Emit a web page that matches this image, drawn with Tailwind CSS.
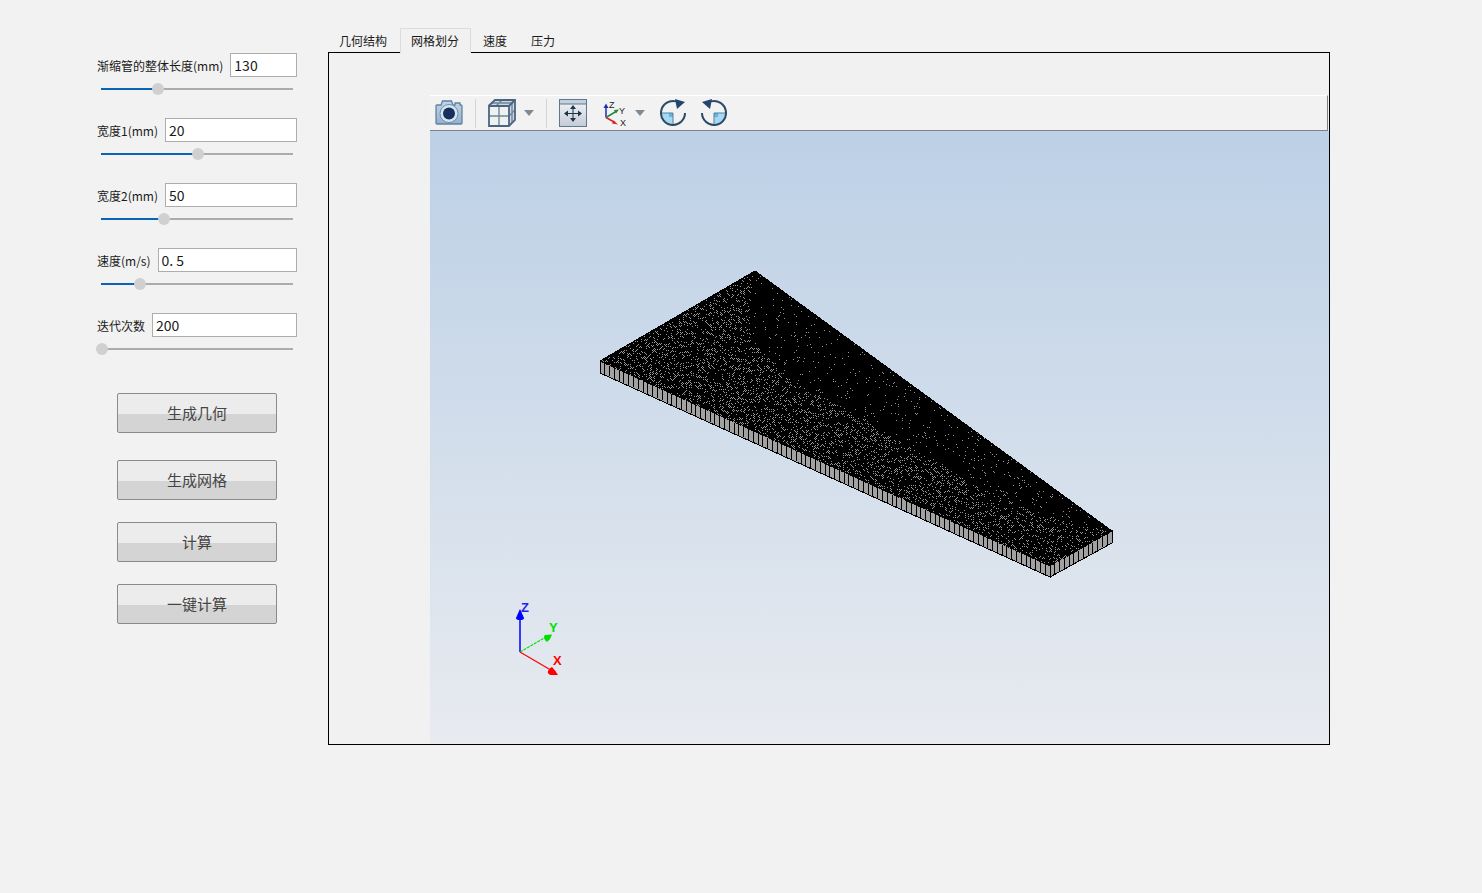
<!DOCTYPE html>
<html lang="en">
<head>
  <meta charset="UTF-8" />
  <title>渐缩管</title>
  <script src="https://cdn.jsdelivr.net/npm/@tailwindcss/browser@4"></script>
</head>
<body class="bg-[#f2f2f2] text-[#1a1a1a] text-[12px] font-['Noto_Sans_CJK_SC','Liberation_Sans',sans-serif]">
<div class="w-[1482px] h-[893px] overflow-hidden flex">

  <!-- Left form -->
  <div class="w-[328px] pl-[97px] pt-[53px] shrink-0">
    <div class="w-[200px] h-[65px]">
      <div class="flex items-center h-[24px] gap-[7px]">
        <span class="whitespace-nowrap pt-[1px]">渐缩管的整体长度(mm)</span>
        <input value="130" class="min-w-0 flex-1 h-[24px] bg-white border border-[#adadad] px-[3px] text-[14px] outline-none" />
      </div>
      <div class="relative mt-[11px] ml-[4px] w-[192px] h-[2px] bg-[#acacac]">
        <div class="h-[2px] w-[57px] bg-[#0a64b4]"></div>
        <div class="absolute left-[51px] top-[-5px] w-[12px] h-[12px] rounded-full bg-[#d0d0d0]"></div>
      </div>
    </div>
    <div class="w-[200px] h-[65px]">
      <div class="flex items-center h-[24px] gap-[7px]">
        <span class="whitespace-nowrap pt-[1px]">宽度1(mm)</span>
        <input value="20" class="min-w-0 flex-1 h-[24px] bg-white border border-[#adadad] px-[3px] text-[14px] outline-none" />
      </div>
      <div class="relative mt-[11px] ml-[4px] w-[192px] h-[2px] bg-[#acacac]">
        <div class="h-[2px] w-[97px] bg-[#0a64b4]"></div>
        <div class="absolute left-[91px] top-[-5px] w-[12px] h-[12px] rounded-full bg-[#d0d0d0]"></div>
      </div>
    </div>
    <div class="w-[200px] h-[65px]">
      <div class="flex items-center h-[24px] gap-[7px]">
        <span class="whitespace-nowrap pt-[1px]">宽度2(mm)</span>
        <input value="50" class="min-w-0 flex-1 h-[24px] bg-white border border-[#adadad] px-[3px] text-[14px] outline-none" />
      </div>
      <div class="relative mt-[11px] ml-[4px] w-[192px] h-[2px] bg-[#acacac]">
        <div class="h-[2px] w-[63px] bg-[#0a64b4]"></div>
        <div class="absolute left-[57px] top-[-5px] w-[12px] h-[12px] rounded-full bg-[#d0d0d0]"></div>
      </div>
    </div>
    <div class="w-[200px] h-[65px]">
      <div class="flex items-center h-[24px] gap-[7px]">
        <span class="whitespace-nowrap pt-[1px]">速度(m/s)</span>
        <input value="0. 5" class="min-w-0 flex-1 h-[24px] bg-white border border-[#adadad] px-[3px] text-[14px] outline-none" />
      </div>
      <div class="relative mt-[11px] ml-[4px] w-[192px] h-[2px] bg-[#acacac]">
        <div class="h-[2px] w-[39px] bg-[#0a64b4]"></div>
        <div class="absolute left-[33px] top-[-5px] w-[12px] h-[12px] rounded-full bg-[#d0d0d0]"></div>
      </div>
    </div>
    <div class="w-[200px] h-[80px]">
      <div class="flex items-center h-[24px] gap-[7px]">
        <span class="whitespace-nowrap pt-[1px]">迭代次数</span>
        <input value="200" class="min-w-0 flex-1 h-[24px] bg-white border border-[#adadad] px-[3px] text-[14px] outline-none" />
      </div>
      <div class="relative mt-[11px] ml-[4px] w-[192px] h-[2px] bg-[#acacac]">
        <div class="absolute left-[-5px] top-[-5px] w-[12px] h-[12px] rounded-full bg-[#d0d0d0]"></div>
      </div>
    </div>

    <div class="ml-[20px] w-[160px] text-[15px] text-[#444]">
      <button class="block w-full h-[40px] border border-[#8a8a8a] rounded-[2px] bg-[linear-gradient(#ececec_20px,#d4d4d4_20px)]">生成几何</button>
      <button class="block w-full h-[40px] mt-[27px] border border-[#8a8a8a] rounded-[2px] bg-[linear-gradient(#ececec_20px,#d4d4d4_20px)]">生成网格</button>
      <button class="block w-full h-[40px] mt-[22px] border border-[#8a8a8a] rounded-[2px] bg-[linear-gradient(#ececec_20px,#d4d4d4_20px)]">计算</button>
      <button class="block w-full h-[40px] mt-[22px] border border-[#8a8a8a] rounded-[2px] bg-[linear-gradient(#ececec_20px,#d4d4d4_20px)]">一键计算</button>
    </div>
  </div>

  <!-- Tabs and viewer -->
  <div class="w-[1002px] pt-[28px] shrink-0">
    <div class="flex h-[25px] items-end relative z-10">
      <div class="pl-[11px] pr-[12px] h-[24px] leading-[24px]">几何结构</div>
      <div class="px-[10px] h-[25px] leading-[24px] border border-b-0 border-[#dcdcdc] bg-[#f1f1f1] w-[71px] ml-[1px]">网格划分</div>
      <div class="px-[12px] h-[24px] leading-[24px]">速度</div>
      <div class="px-[12px] h-[24px] leading-[24px]">压力</div>
    </div>
    <div class="h-[693px] -mt-[1px] border border-black bg-[#f1f1f1] pl-[101px] pt-[42px]">
      <!-- Toolbar -->
      <div class="h-[36px] w-[898px] bg-[#f2f2f2] border-t border-white border-b border-b-[#808080] border-r border-r-[#808080] flex items-center">
        <!-- camera -->
        <svg class="ml-[5px]" width="28" height="28" viewBox="0 0 28 28">
          <defs><linearGradient id="cam" x1="0" y1="0" x2="0" y2="1"><stop offset="0" stop-color="#c5d6e6"/><stop offset="1" stop-color="#93b0cc"/></linearGradient></defs>
          <path d="M1.500 6H6L7.500 2h9L18 6h2V4h5v2h1a1 1 0 0 1 1 1v17a1 1 0 0 1-1 1H2a1 1 0 0 1-1-1V7a1 1 0 0 1 .5-1z" fill="url(#cam)" stroke="#5f82a4" stroke-width="1.300"/>
          <circle cx="14" cy="14.500" r="9" fill="#d8e5f0" stroke="#6f90b0"/>
          <circle cx="14" cy="14.500" r="6" fill="#17315e"/>
        </svg>
        <div class="ml-[12px] w-[1px] h-[29px] bg-[#d4d4d4]"></div>
        <!-- cube -->
        <svg class="ml-[12px]" width="28" height="28" viewBox="0 0 28 28">
          <path d="M1 6.500 7 1h20v20l-6 6H1z" fill="#cfd6dd"/>
          <path d="M1 7h20v20H1z" fill="#eef0f2"/>
          <path d="M11 7v20M1 17h20M8 7l6-6M21 17l6-6M4 4h20M24 4v20" fill="none" stroke="#6f879c" stroke-width="1.400"/>
          <path d="M1 6.500 7 1h20v20l-6 6H1zM1 7h20v20M21 7l6-6" fill="none" stroke="#4a6580" stroke-width="1.800"/>
        </svg>
        <svg class="ml-[8px]" width="10" height="6" viewBox="0 0 10 6"><path d="M0 0h10L5 6z" fill="#808a94"/></svg>
        <div class="ml-[12px] w-[1px] h-[29px] bg-[#d4d4d4]"></div>
        <!-- fit -->
        <svg class="ml-[12px]" width="28" height="28" viewBox="0 0 28 28">
          <defs><linearGradient id="fit" x1="0" y1="0" x2="0" y2="1"><stop offset="0" stop-color="#f5f6f8"/><stop offset="1" stop-color="#c3cbd6"/></linearGradient></defs>
          <rect x=".5" y=".5" width="27" height="27" fill="url(#fit)" stroke="#5f7890"/>
          <rect x="1" y="1" width="26" height="4" fill="#c4d0dc"/>
          <path d="M1 5h26" stroke="#5f7890"/>
          <path d="M14 8v12M7 14.500h14" stroke="#1f3347" stroke-width="1"/>
          <path d="M14 6l-3 4h6zM14 23l-3-4h6zM5 14.500l4-3v6zM23 14.500l-4-3v6z" fill="#1f3347"/>
        </svg>
        <!-- axes -->
        <svg class="ml-[15px]" width="27" height="28" viewBox="0 0 27 28">
          <path d="M4 18.500V8" stroke="#1b2fb5" stroke-width="1.500"/><path d="M4 4.500 1.500 9h5z" fill="#1b2fb5"/>
          <path d="M4 18.500l10-6" stroke="#1f8a3d" stroke-width="1.500"/><path d="M17 10.500l-5 .5 2 3.500z" fill="#1f8a3d"/>
          <path d="M4 18.500l9 5" stroke="#d8232a" stroke-width="1.500"/><path d="M16 25.500l-4.500-4-1.500 3z" fill="#d8232a"/>
          <text x="7" y="9" font-family="Liberation Sans" font-size="9" fill="#222">Z</text>
          <text x="17" y="15" font-family="Liberation Sans" font-size="9" fill="#222">Y</text>
          <text x="18" y="27" font-family="Liberation Sans" font-size="9" fill="#222">X</text>
        </svg>
        <svg class="ml-[6px]" width="10" height="6" viewBox="0 0 10 6"><path d="M0 0h10L5 6z" fill="#808a94"/></svg>
        <!-- rotate -->
        <svg class="ml-[15px]" width="26" height="28" viewBox="0 0 26 28">
          <path d="M13 14V26A12 12 0 0 1 1.500 14z" fill="#a5d9f2"/>
          <rect x="9" y="14" width="4" height="4" fill="#5db7e3"/>
          <path d="M1.500 14H13v12" fill="none" stroke="#5a7c9a"/>
          <path d="M16 2.400A12 12 0 1 0 25 14" fill="none" stroke="#2b4a68" stroke-width="2"/>
          <path d="M15 0 25 3l-8 7z" fill="#23456b"/>
        </svg>
        <svg class="ml-[15px]" width="26" height="28" viewBox="0 0 26 28">
          <path d="M13 14V26A12 12 0 0 0 24.500 14z" fill="#a5d9f2"/>
          <rect x="13" y="14" width="4" height="4" fill="#5db7e3"/>
          <path d="M24.500 14H13v12" fill="none" stroke="#5a7c9a"/>
          <path d="M10 2.400A12 12 0 1 1 1 14" fill="none" stroke="#2b4a68" stroke-width="2"/>
          <path d="M11 0 1 3l8 7z" fill="#23456b"/>
        </svg>
      </div>
      <!-- 3D view -->
      <svg id="view" class="block" width="899" height="613" viewBox="430 131 899 613">
        <defs>
          <linearGradient id="bg" x1="0" y1="0" x2="0" y2="1">
            <stop offset="0" stop-color="#bcd0e6"/>
            <stop offset="1" stop-color="#e8ebf0"/>
          </linearGradient>
        </defs>
        <rect x="430" y="131" width="899" height="613" fill="url(#bg)"/>
        <polygon points="600,361 600,373 1050,577 1050,566" fill="#a2a2a2" stroke="#000" shape-rendering="crispEdges"/>
        <polygon points="1050,566 1050,577 1112,543 1112,531" fill="#a2a2a2" stroke="#000" shape-rendering="crispEdges"/>
        <path id="side" fill="none" stroke="#000" shape-rendering="crispEdges"/>
        <polygon points="600,361 755,271 1112,531 1050,566" fill="#000" stroke="#000" shape-rendering="crispEdges"/>
        <path id="mesh" fill="none" stroke="#969696" shape-rendering="crispEdges"/>

        <!-- triad -->
        <path d="M520 652V618" stroke="#0000ff" stroke-width="1.500"/>
        <path d="M520 609q1 2 4 9q0 2-4 2t-4-2q3-7 4-9z" fill="#0000ff"/>
        <path d="M520 652l26-15" stroke="#00e000" stroke-width="1.200" stroke-dasharray="3 1"/>
        <path d="M552 634.500l-7 .5q-2 2 0 5t3 1q2-1 4-6.500z" fill="#00e000"/>
        <path d="M520 652l29 17" stroke="#ff0000" stroke-width="1.200"/>
        <path d="M558 675h-7q-4-1-3-4t4-4q3 3 6 8z" fill="#ff0000"/>
        <text x="521" y="612" font-family="Liberation Sans" font-size="13" font-weight="700" fill="#2222ee">Z</text>
        <text x="549" y="632" font-family="Liberation Sans" font-size="13" font-weight="700" fill="#00e000">Y</text>
        <text x="553" y="665" font-family="Liberation Sans" font-size="13" font-weight="700" fill="#ff0000">X</text>
      </svg>
    </div>
  </div>
</div>

<script>
  // top face dots
  const quad = [[600, 361], [755, 271], [1112, 531], [1050, 566]];
  const edge = [[750, 340], [787, 377], [853, 413], [920, 453], [985, 490], [1047, 517], [1112, 531]];

  function inside(x, y) {
    for (let i = 0; i < 4; i++) {
      const a = quad[i], b = quad[(i + 1) % 4];
      if ((b[0] - a[0]) * (y - a[1]) - (b[1] - a[1]) * (x - a[0]) < 1) return false;
    }
    return true;
  }

  function edgeY(x) {
    for (let i = 0; i < edge.length - 1; i++) {
      const a = edge[i], b = edge[i + 1];
      if (x <= b[0]) return a[1] + (b[1] - a[1]) * (x - a[0]) / (b[0] - a[0]);
    }
    return 531;
  }

  let seed = 12345;
  function rnd() {
    seed = (Math.imul(seed, 1664525) + 1013904223) >>> 0;
    return (seed >>> 8) / 16777216;
  }

  let dots = '';
  for (let y = 271; y < 567; y++) {
    for (let x = 600; x < 1113; x++) {
      const r = rnd();
      if ((x + y) % 2 || !inside(x, y)) continue;
      let p;
      if (x > 750 && y < edgeY(x)) {
        p = 0.045;
      } else {
        // scalloped bands running along the long edge
        const w = Math.sin((y - 0.46 * x + 8 * Math.sin(x / 12)) / 1.6);
        p = (0.42 - (x - 600) * 0.0002) * (0.65 + 0.35 * w);
      }
      if (r < p) dots += `M${x} ${y}.5h1`;
    }
  }
  document.getElementById('mesh').setAttribute('d', dots);

  // side faces
  let e = '';
  for (let i = 0; i <= 94; i++) {
    const x = 600 + 450 * i / 94, y = 361 + 205 * i / 94;
    e += `M${x.toFixed(1)} ${y.toFixed(1)}v11`;
  }
  for (let i = 0; i <= 13; i++) {
    const x = 1050 + 62 * i / 13, y = 566 - 35 * i / 13;
    e += `M${x.toFixed(1)} ${y.toFixed(1)}v11`;
  }
  document.getElementById('side').setAttribute('d', e);
</script>
</body>
</html>
